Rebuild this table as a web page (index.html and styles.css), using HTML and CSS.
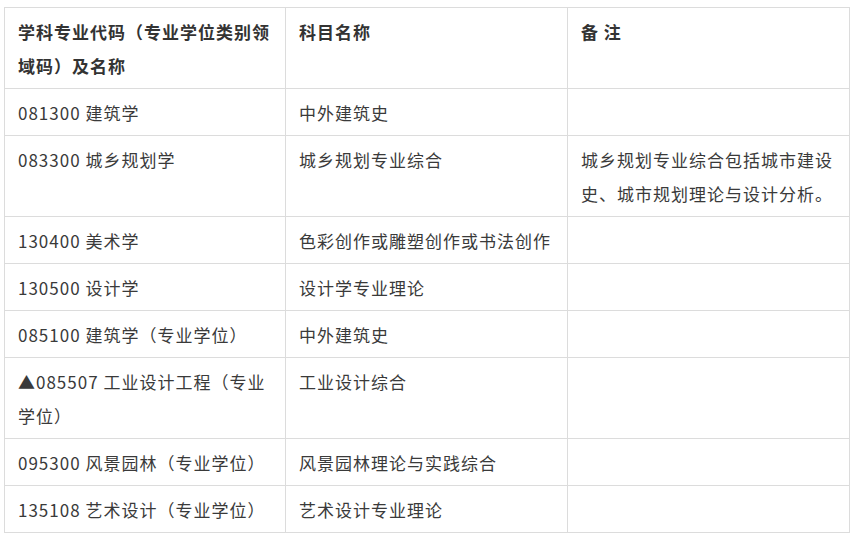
FILE: index.html
```html
<!DOCTYPE html>
<html lang="zh">
<head>
<meta charset="utf-8">
<link rel="stylesheet" href="styles.css">
</head>
<body>
<div class="page">
<table class="grid">
<colgroup><col class="c1"><col class="c2"><col class="c3"></colgroup>
<tr class="head"><td>学科专业代码（专业学位类别领域码）及名称</td><td>科目名称</td><td>备 注</td></tr>
<tr><td>081300 建筑学</td><td>中外建筑史</td><td></td></tr>
<tr><td>083300 城乡规划学</td><td>城乡规划专业综合</td><td>城乡规划专业综合包括城市建设史、城市规划理论与设计分析。</td></tr>
<tr><td>130400 美术学</td><td>色彩创作或雕塑创作或书法创作</td><td></td></tr>
<tr><td>130500 设计学</td><td>设计学专业理论</td><td></td></tr>
<tr><td>085100 建筑学（专业学位）</td><td>中外建筑史</td><td></td></tr>
<tr><td>▲085507 工业设计工程（专业学位）</td><td>工业设计综合</td><td></td></tr>
<tr><td>095300 风景园林（专业学位）</td><td>风景园林理论与实践综合</td><td></td></tr>
<tr><td>135108 艺术设计（专业学位）</td><td>艺术设计专业理论</td><td></td></tr>
</table>
</div>
</body>
</html>
```
FILE: styles.css
```css
html, body { margin: 0; padding: 0; background: #fff; }
.page { padding: 7px 7px 0 4px; }
.grid {
  width: 845px;
  border-collapse: collapse;
  table-layout: fixed;
  font-family: "Noto Sans CJK SC", "Noto Sans", sans-serif;
  font-size: 17px;
  letter-spacing: 1px;
  line-height: 34px;
  color: #3a3a3a;
}
.c1 { width: 281px; }
.c2 { width: 282px; }
.c3 { width: 282px; }
.grid td {
  border: 1px solid #dcdcdc;
  padding: 7px 12px 5px 13px;
  vertical-align: top;
  word-break: break-all;
}
.head td { font-weight: bold; color: #333; }
```
